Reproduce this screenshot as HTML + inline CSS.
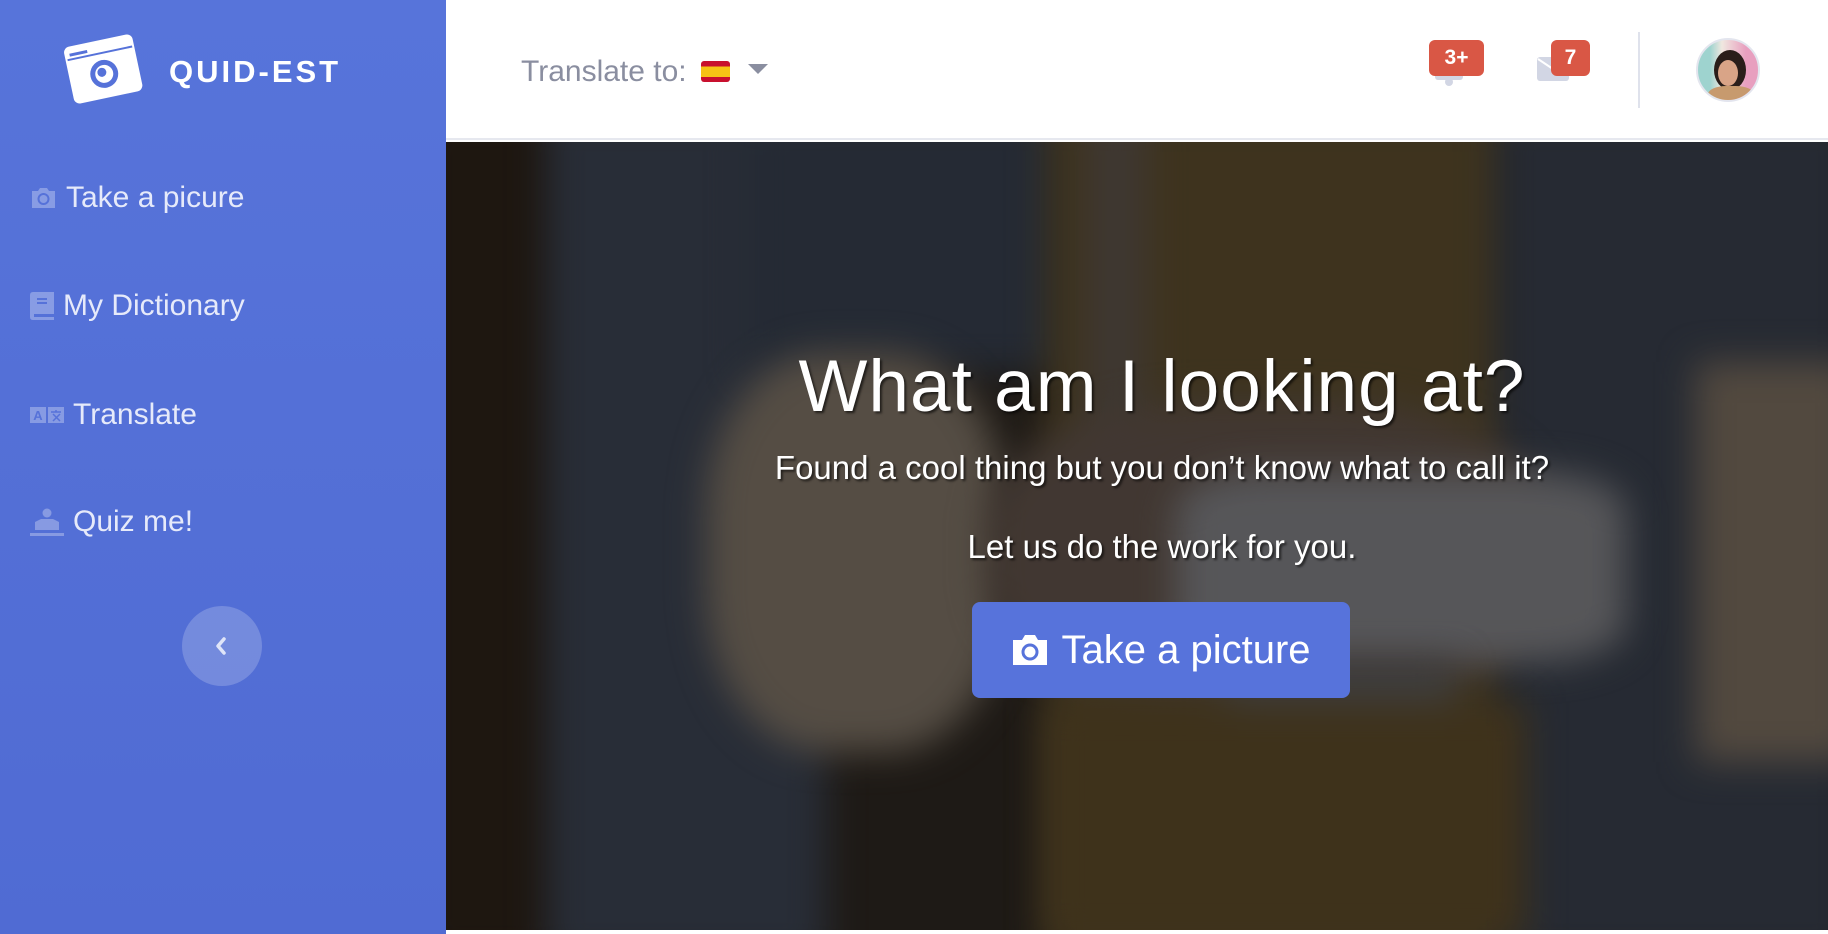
<!DOCTYPE html>
<html><head><meta charset="utf-8"><style>
*{margin:0;padding:0;box-sizing:border-box}
html,body{width:1828px;height:934px;overflow:hidden;background:#fff;font-family:"Liberation Sans",sans-serif}
#side{position:absolute;left:0;top:0;width:446px;height:934px;background:linear-gradient(#5774da,#506bd3)}
.logo{position:absolute;left:60px;top:30px}
.brand{position:absolute;left:169px;top:54px;color:#fff;font-weight:bold;font-size:31px;letter-spacing:3px}
.nav{position:absolute;left:30px;color:#e6eafa;font-size:30px;display:flex;align-items:center}
.nav svg{margin-right:9px}
.circ{position:absolute;left:182px;top:606px;width:80px;height:80px;border-radius:50%;background:rgba(255,255,255,.2)}
#head{position:absolute;left:446px;top:0;width:1382px;height:140px;background:#fff;border-bottom:2px solid #e6e8ef}
.tr{position:absolute;left:75px;top:55px;font-size:30px;color:#8a8ea0}
.badge{position:absolute;height:36px;background:#d95745;color:#fff;border-radius:6px;font-weight:bold;font-size:21px;text-align:center;line-height:36px}
#hero{position:absolute;left:446px;top:142px;width:1382px;height:788px;overflow:hidden;background:#2c2620}
#hero .b{position:absolute;filter:blur(18px)}
.ov{position:absolute;inset:0;background:rgba(0,0,0,.3)}
.t{position:absolute;left:0;width:1432px;text-align:center;color:#fff;text-shadow:2px 2px 2px rgba(0,0,0,.6)}
.btn{position:absolute;left:526px;top:460px;width:378px;height:96px;background:#5773db;border-radius:8px;color:#fff;font-size:40px;display:flex;align-items:center;justify-content:center}
</style></head><body>
<div id="side">
 <svg class="logo" width="86" height="76" viewBox="0 0 86 76"><g transform="rotate(-12 43 38)"><rect x="8" y="10" width="70" height="58" rx="6" fill="#fff"/><rect x="13" y="17" width="18" height="3" fill="#5672d9"/><line x1="10" y1="23" x2="76" y2="23" stroke="#5672d9" stroke-width="2"/><circle cx="43" cy="44" r="14" fill="#5672d9"/><circle cx="43" cy="44" r="9" fill="#fff"/><circle cx="41" cy="42" r="4.5" fill="#5672d9"/></g></svg>
 <div class="brand">QUID-EST</div>
 <div class="nav" style="top:181px"><svg width="27" height="24" viewBox="0 0 27 24"><path d="M2 5h6l2-3h7l2 3h6v17H2z" fill="rgba(255,255,255,.3)"/><circle cx="13.5" cy="13" r="5" fill="none" stroke="#5672d9" stroke-width="2"/></svg>Take a picure</div>
 <div class="nav" style="top:289px"><svg width="24" height="28" viewBox="0 0 24 28"><path d="M0 3q0-3 3-3h21v22H4v3h20v3H3q-3 0-3-3z" fill="rgba(255,255,255,.3)"/><rect x="7" y="6" width="10" height="2" fill="#5672d9"/><rect x="7" y="10" width="10" height="2" fill="#5672d9"/></svg>My Dictionary</div>
 <div class="nav" style="top:398px"><svg width="34" height="18" viewBox="0 0 34 18"><rect x="0" y="1" width="16" height="16" fill="rgba(255,255,255,.3)"/><rect x="18" y="1" width="16" height="16" fill="rgba(255,255,255,.3)"/><text x="8" y="14" font-size="13" font-weight="bold" fill="#5672d9" text-anchor="middle" font-family="Liberation Sans">A</text><path d="M21 6h10M26 4v2M23 8l7 7M30 8l-7 7" stroke="#5672d9" stroke-width="1.5"/></svg>Translate</div>
 <div class="nav" style="top:505px"><svg width="34" height="28" viewBox="0 0 34 28"><circle cx="17" cy="5" r="4.5" fill="rgba(255,255,255,.3)"/><path d="M5 14l6-3h12l6 3v8H5z" fill="rgba(255,255,255,.3)"/><rect x="0" y="25" width="34" height="3" fill="rgba(255,255,255,.3)"/></svg>Quiz me!</div>
 <div class="circ"><svg width="80" height="80" viewBox="0 0 80 80"><path d="M42 33l-6 7 6 7" fill="none" stroke="#dfe5f8" stroke-width="3.5" stroke-linecap="round" stroke-linejoin="round"/></svg></div>
</div>
<div id="head">
 <div class="tr">Translate to: <span style="display:inline-block;width:29px;height:21px;vertical-align:-1px;background:linear-gradient(#c8102e 25%,#f6c315 25%,#f6c315 75%,#c8102e 75%);border-radius:3px;margin-left:6px"></span></div>
 <svg style="position:absolute;left:302px;top:64px" width="20" height="10"><path d="M0 0h20l-10 10z" fill="#8a8ea0"/></svg>
 <svg style="position:absolute;left:988px;top:58px" width="30" height="28"><rect x="1" y="0" width="28" height="22" rx="3" fill="#d2d6e4"/><circle cx="15" cy="24" r="4" fill="#d2d6e4"/></svg>
 <div class="badge" style="left:983px;top:40px;width:55px">3+</div>
 <svg style="position:absolute;left:1091px;top:57px" width="34" height="26"><rect x="0" y="0" width="32" height="24" rx="3" fill="#d2d6e4"/><path d="M1 2l15 10" stroke="#fff" stroke-width="2"/></svg>
 <div class="badge" style="left:1105px;top:40px;width:39px">7</div>
 <div style="position:absolute;left:1192px;top:32px;width:2px;height:76px;background:#dfe2ec"></div>
 <div style="position:absolute;left:1250px;top:38px;width:64px;height:64px;border-radius:50%;border:2px solid #e3e5ee;background:linear-gradient(90deg,#9ed3cf 20%,#f0e8e0 40%,#e89fbf 80%);overflow:hidden"><div style="position:absolute;left:16px;top:10px;width:32px;height:40px;border-radius:50%;background:#2a1e1a"></div><div style="position:absolute;left:20px;top:20px;width:20px;height:26px;border-radius:50%;background:#d9a487"></div><div style="position:absolute;left:10px;top:46px;width:46px;height:20px;border-radius:40%;background:#c79a6e"></div></div>
</div>
<div id="hero">
 <div class="b" style="left:-30px;top:-30px;width:150px;height:850px;background:#2b2118"></div>
 <div class="b" style="left:100px;top:-30px;width:280px;height:850px;background:#3a414f"></div>
 <div class="b" style="left:300px;top:-30px;width:330px;height:260px;background:#353d4b"></div>
 <div class="b" style="left:600px;top:-30px;width:470px;height:850px;background:#594a2c"></div>
 <div class="b" style="left:640px;top:-30px;width:60px;height:420px;background:#5a5048"></div>
 <div class="b" style="left:1050px;top:-30px;width:360px;height:850px;background:#373d49"></div>
 <div class="b" style="left:260px;top:210px;width:300px;height:400px;background:#7a6f62;border-radius:40%"></div>
 <div class="b" style="left:1250px;top:220px;width:160px;height:400px;background:#76695b"></div>
 <div class="b" style="left:540px;top:260px;width:560px;height:300px;background:#5e5048;border-radius:40%"></div>
 <div class="b" style="left:730px;top:330px;width:450px;height:190px;background:#7c7c80;border-radius:20%"></div>
 <div class="b" style="left:780px;top:520px;width:230px;height:120px;background:#5a5a5c"></div>
 <div class="b" style="left:600px;top:560px;width:480px;height:240px;background:#5a4828"></div>
 <div class="ov"></div>
 <div class="t" style="top:203px;font-size:73px;letter-spacing:1px">What am I looking at?</div>
 <div class="t" style="top:307px;font-size:33px">Found a cool thing but you don’t know what to call it?</div>
 <div class="t" style="top:386px;font-size:33px">Let us do the work for you.</div>
 <div class="btn"><svg width="38" height="34" viewBox="0 0 38 34" style="margin-right:12px"><path d="M2 7h9l3-5h10l3 5h9v25H2z" fill="#fff"/><circle cx="19" cy="19" r="7" fill="none" stroke="#5773db" stroke-width="3"/></svg>Take a picture</div>
</div>
</body></html>
